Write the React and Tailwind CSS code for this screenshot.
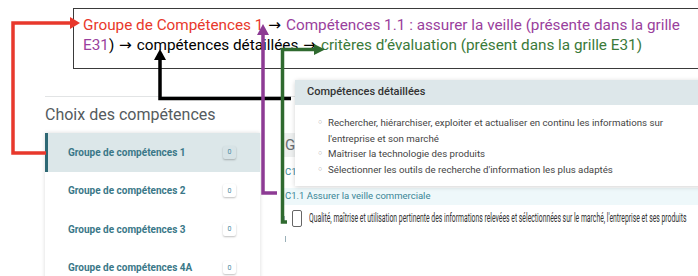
import React from "react";

const groups = [
  "Groupe de compétences 1",
  "Groupe de compétences 2",
  "Groupe de compétences 3",
  "Groupe de compétences 4A",
];

const details = [
  "Rechercher, hiérarchiser, exploiter et actualiser en continu les informations sur l'entreprise et son marché",
  "Maîtriser la technologie des produits",
  "Sélectionner les outils de recherche d'information les plus adaptés",
];

const Arrows = () => (
  <svg
    className="absolute inset-0 pointer-events-none"
    width="698"
    height="276"
    viewBox="0 0 698 276"
  >
    {/* red */}
    <polyline
      points="46,153 13,153 13,23 72,23"
      fill="none"
      stroke="#e8382c"
      strokeWidth="3.5"
    />
    <polygon points="70,17 80,23 70,29" fill="#e8382c" />
    {/* black */}
    <polyline
      points="291,98.5 160,98.5 160,57"
      fill="none"
      stroke="#000"
      strokeWidth="3.5"
    />
    <polygon points="154,60 160,49 166,60" fill="#000" />
    {/* purple */}
    <polyline
      points="277,193 263,193 263,32"
      fill="none"
      stroke="#8d3b94"
      strokeWidth="3.5"
    />
    <polygon points="257,35 263,24 269,35" fill="#8d3b94" />
    {/* green */}
    <polyline
      points="287,222 282.5,222 282.5,49.5 316,49.5"
      fill="none"
      stroke="#2f6a2f"
      strokeWidth="3.5"
    />
    <polygon points="314,44 325,49.5 314,55" fill="#2f6a2f" />
  </svg>
);

const Arrow = () => (
  <span className="font-['DejaVu_Sans',sans-serif] text-black"> → </span>
);

const App = () => {
  return (
    <div className="relative w-[698px] h-[276px] overflow-hidden bg-white font-['Roboto',sans-serif]">
      {/* annotation box */}
      <div className="ml-[73px] mt-[8px] h-[61px] border-[1.5px] border-r-0 border-[#3a3a3a] pl-[9px] pt-[6px] text-[15.3px] leading-[20px] text-black whitespace-nowrap">
        <div>
          <span className="text-[#e8382c]">Groupe de Compétences 1</span>
          <Arrow />
          <span className="text-[#9a3f9d]">
            Compétences 1.1 : assurer la veille (présente dans la grille
          </span>
        </div>
        <div>
          <span className="text-[#9a3f9d]">E31</span>)
          <Arrow />
          compétences détaillées
          <Arrow />
          <span className="text-[#3b7a3a]">
            critères d’évaluation (présent dans la grille E31)
          </span>
        </div>
      </div>

      {/* page */}
      <div className="mt-[27px] pl-[45px]">
        <div className="w-[250px] border-t border-[#e2e4e5]" />
        <div className="h-[36px] flex items-center text-[16px] text-[#555b5e]">
          Choix des compétences
        </div>
        <div className="flex">
          <div className="w-[215px] shrink-0 bg-white shadow-[0_0_4px_rgba(0,0,0,0.15)]">
            {groups.map((g, i) => (
              <div
                key={i}
                className={
                  i === 0
                    ? "h-[38.5px] flex items-center justify-between pl-[20px] pr-[24px] border-l-[3px] border-[#2e6874] bg-[#dce7e9]"
                    : "h-[38.5px] flex items-center justify-between pl-[20px] pr-[24px] border-l-[3px] border-transparent"
                }
              >
                <span className="text-[10px] font-bold text-[#3a7888] whitespace-nowrap">{g}</span>
                <span
                  className={
                    i === 0
                      ? "w-[13px] h-[13px] flex items-center justify-center text-[7px] text-[#4a8aa0] bg-[#d7e3e6] shadow-[0_1px_2px_rgba(0,0,0,0.25)] rounded-[2px]"
                      : "w-[13px] h-[13px] flex items-center justify-center text-[7px] text-[#4a8aa0] bg-white shadow-[0_1px_2px_rgba(0,0,0,0.25)] rounded-[2px]"
                  }
                >
                  0
                </span>
              </div>
            ))}
          </div>
          <div className="flex-1 min-w-0 ml-[22px]">
            <div className="h-[24px] flex items-center pl-[3px] bg-[#eef0f0] text-[15px] text-[#6a6e70]">
              Gr
            </div>
            <div className="h-[31px] flex items-center pl-[3px] text-[9.5px] text-[#3a8596]">
              C1
            </div>
            <div className="h-[17px] flex items-center pl-[3px] bg-[#eef8fa] text-[9.5px] text-[#3a8596]">
              C1.1 Assurer la veille commerciale
            </div>
            <div className="h-[26px] flex items-center pl-[2px] gap-[7px]">
              <span className="w-[1px] h-[5px] bg-[#9ab0b8] shrink-0" />
              <span className="w-[10px] h-[17px] shrink-0 border border-[#666] rounded-[2px]" />
              <span className="whitespace-nowrap text-[13px] text-[#333] origin-left scale-x-[0.525] inline-block">
                Qualité, maîtrise et utilisation pertinente des informations relevées et sélectionnées sur le marché, l'entreprise et ses produits
              </span>
            </div>
            <div className="pl-[3px] pt-[5px]">
              <div className="w-[1px] h-[6px] bg-[#9ab0b8]" />
            </div>
          </div>
        </div>
      </div>

      {/* popup */}
      <div className="absolute left-[295px] top-[80px] w-[410px] bg-white rounded-tl-[3px] shadow-[0_1px_5px_rgba(0,0,0,0.18)]">
        <div className="h-[25px] flex items-center pl-[12px] bg-[#dde7ea] text-[11px] font-medium text-[#333]">
          Compétences détaillées
        </div>
        <ul className="pt-[10px] pb-[9px] pl-[23px] pr-[30px] text-[9.7px] leading-[15.5px] text-[#444]">
          {details.map((d, i) => (
            <li key={i} className="flex">
              <span className="w-[10px] shrink-0 text-[7px] text-[#aaa]">○</span>
              <span className="w-[345px]">{d}</span>
            </li>
          ))}
        </ul>
      </div>

      <Arrows />
    </div>
  );
};

export default App;
